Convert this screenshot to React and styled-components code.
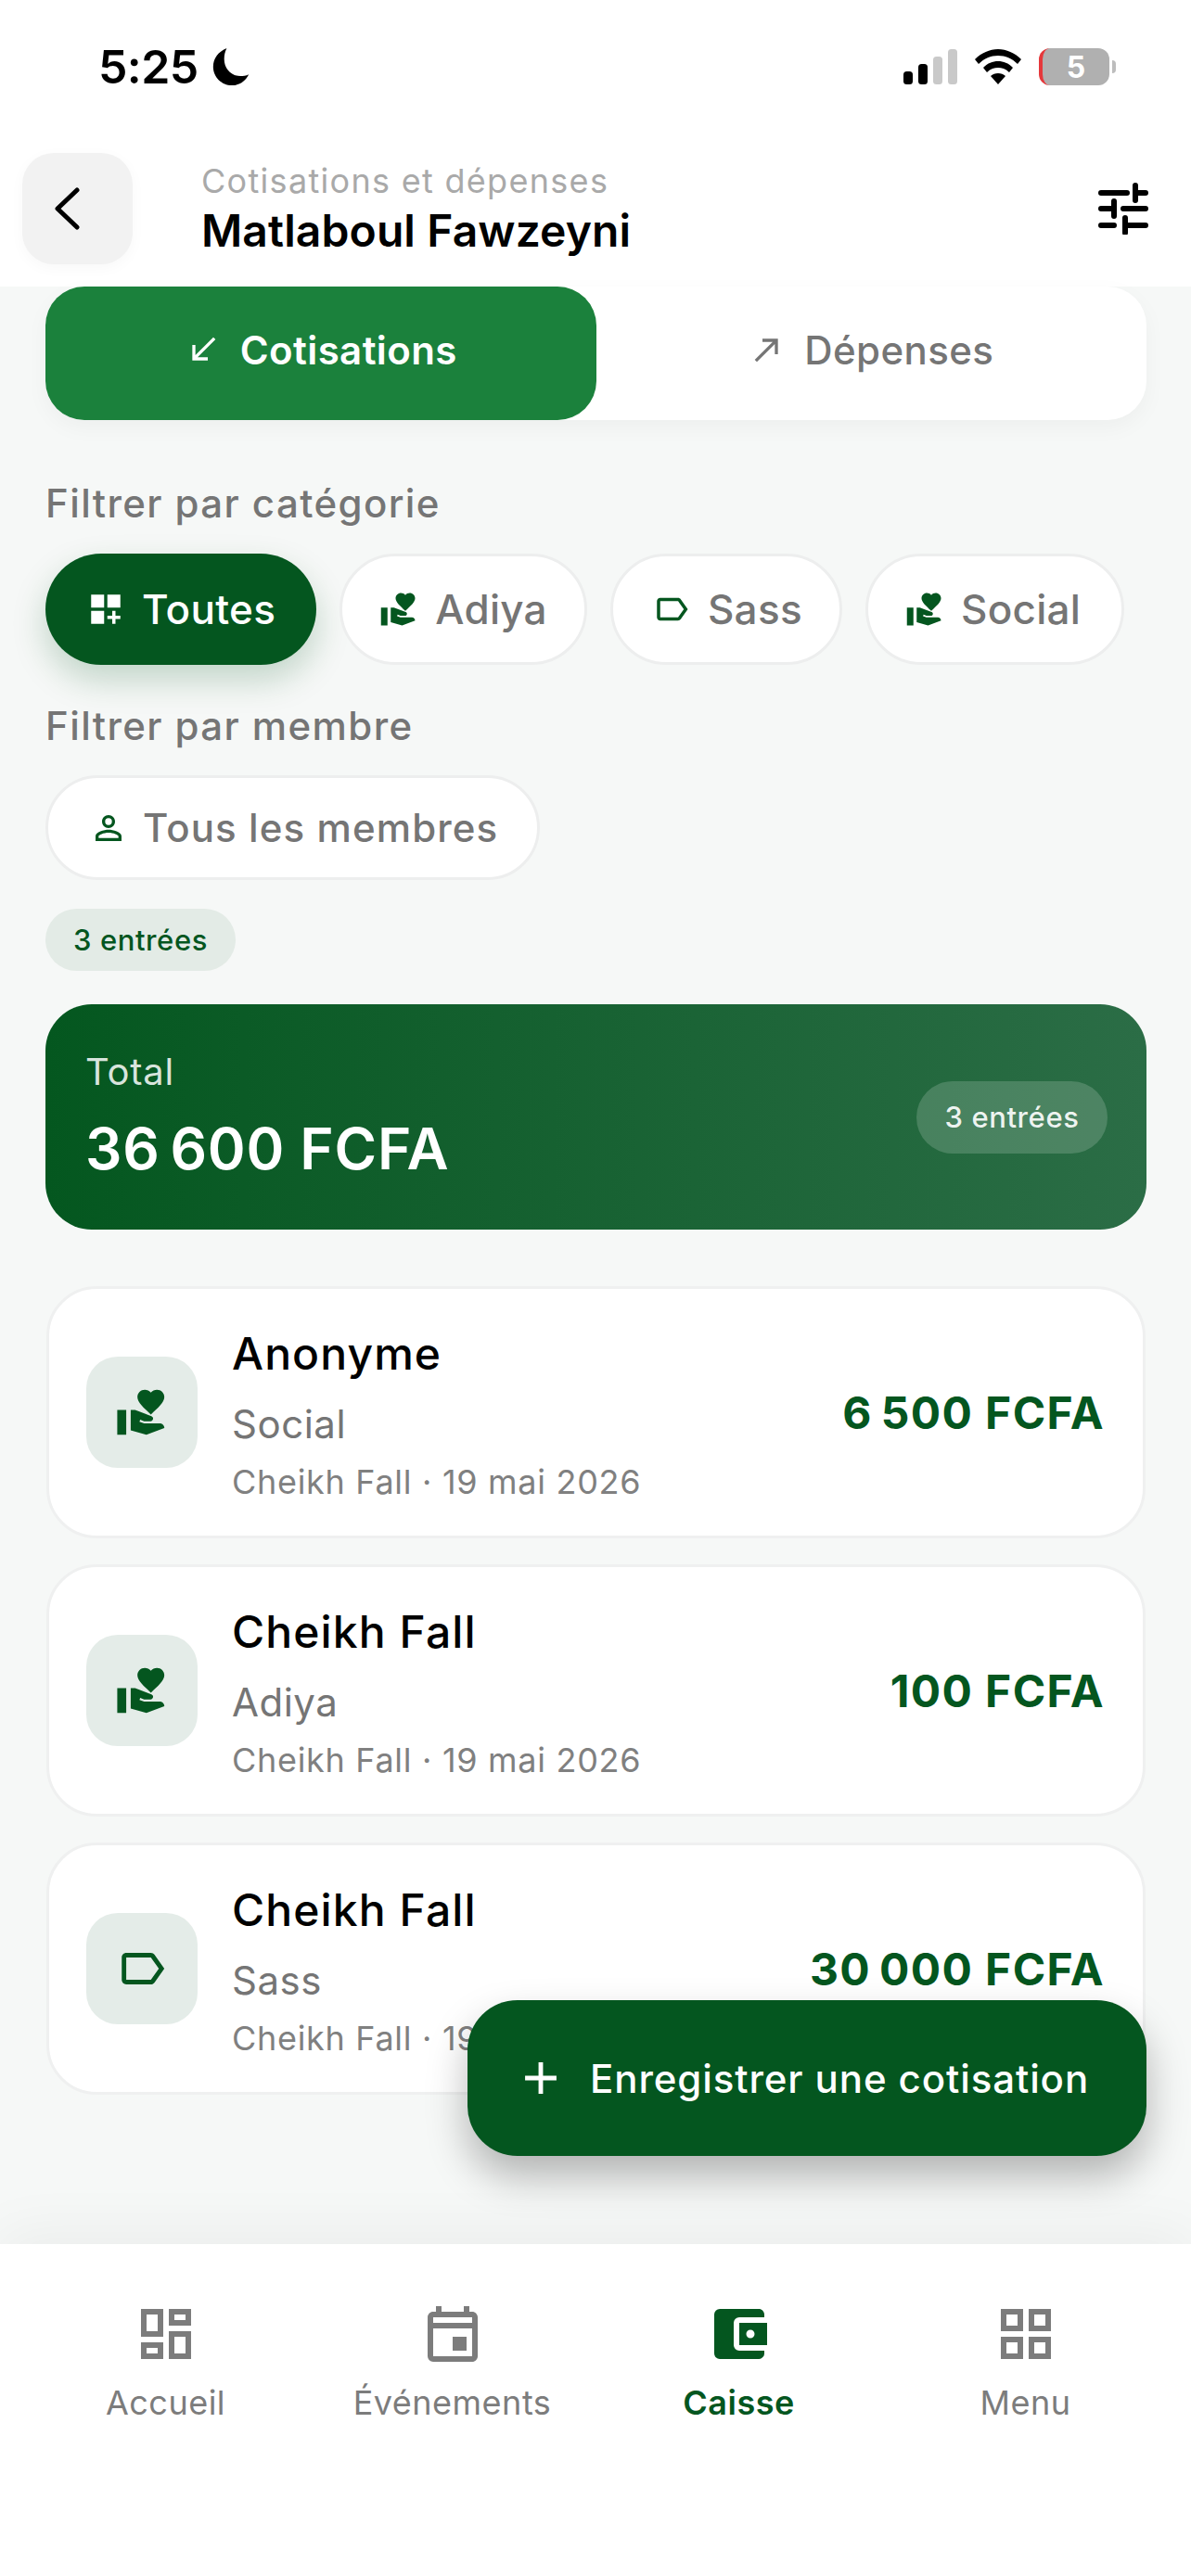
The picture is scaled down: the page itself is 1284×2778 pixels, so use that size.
import React from 'react';
import styled, { createGlobalStyle } from 'styled-components';
import {
  MdCallReceived, MdCallMade, MdDashboardCustomize, MdVolunteerActivism, MdOutlineLabel,
  MdPersonOutline, MdAdd, MdOutlineDashboard, MdOutlineEvent, MdAccountBalanceWallet, MdOutlineGridView,
} from 'react-icons/md';

const GREEN = '#04561F';
const GREY = '#757575';

const Global = createGlobalStyle`
  * { box-sizing: border-box; }
  html, body { margin: 0; padding: 0; background: #fff; }
  body { font-family: Inter, "Noto Sans", sans-serif; }
`;

const Screen = styled.div`
  width: 1284px;
  height: 2778px;
  display: flex;
  flex-direction: column;
  overflow: hidden;
  background: #F6F8F7;
`;

const Top = styled.header`
  background: #fff;
  height: 309px;
  display: flex;
  flex-direction: column;
`;

const StatusBar = styled.div`
  height: 165px;
  padding: 0 88px 0 106px;
  display: flex;
  justify-content: space-between;
  align-items: flex-start;
`;

const Clock = styled.div`
  display: flex;
  align-items: center;
  gap: 14px;
  height: 144px;
  font-size: 50px;
  font-weight: 600;
  color: #000;
  letter-spacing: -0.6px;
`;

const StatusIcons = styled.div`
  display: flex;
  align-items: center;
  gap: 19px;
  height: 144px;
`;

const Battery = styled.div`
  position: relative;
  width: 76px;
  height: 40px;
  border-radius: 12px;
  background: #B0B0B0;
  border-left: 4px solid #E5383B;
  color: #fff;
  font-size: 32px;
  font-weight: 700;
  display: flex;
  align-items: center;
  justify-content: center;
  &::after {
    content: '';
    position: absolute;
    right: -7px;
    top: 13px;
    width: 4px;
    height: 14px;
    border-radius: 0 4px 4px 0;
    background: #BDBDBD;
  }
`;

const HeaderRow = styled.div`
  display: flex;
  align-items: center;
  padding: 0 46px 0 24px;
  gap: 74px;
`;

const BackButton = styled.button`
  width: 119px;
  height: 120px;
  border: 0;
  border-radius: 34px;
  background: #F2F2F2;
  box-shadow: 0 4px 16px rgba(0, 0, 0, 0.03);
  display: flex;
  align-items: center;
  justify-content: center;
  padding: 0 24px 0 0;
  flex: none;
`;

const Titles = styled.div`
  flex: 1;
  display: flex;
  flex-direction: column;
  gap: 3px;
`;

const Overline = styled.div`
  font-size: 36px;
  line-height: 44px;
  color: #A9A9A9;
  letter-spacing: 1.3px;
`;

const Title = styled.div`
  font-size: 48px;
  line-height: 58px;
  font-weight: 600;
  color: #000;
  letter-spacing: 0.1px;
`;

const Main = styled.main`
  position: relative;
  flex: 1;
  padding: 0 48px 0 49px;
  display: flex;
  flex-direction: column;
`;

const Tabs = styled.div`
  display: flex;
  height: 144px;
  background: #fff;
  border-radius: 42px;
  box-shadow: 0 8px 24px rgba(0, 0, 0, 0.04);
`;

const Tab = styled.div`
  flex: 1;
  display: flex;
  align-items: center;
  justify-content: center;
  gap: 20px;
  padding-bottom: 8px;
  border-radius: 42px;
  font-size: 42px;
  font-weight: ${p => (p.$active ? 600 : 500)};
  letter-spacing: 0.4px;
  color: ${p => (p.$active ? '#fff' : GREY)};
  background: ${p => (p.$active ? '#1B813C' : 'transparent')};
`;

const FilterLabel = styled.div`
  font-size: 42px;
  line-height: 48px;
  font-weight: 500;
  letter-spacing: 1.4px;
  color: ${GREY};
  margin-top: ${p => p.$top}px;
  margin-bottom: ${p => p.$bottom}px;
`;

const ChipRow = styled.div`
  display: flex;
  gap: 25px;
`;

const Chip = styled.div`
  height: 120px;
  padding: 0 ${p => p.$padR || 40}px 0 ${p => p.$padL || 40}px;
  border-radius: 60px;
  display: flex;
  align-items: center;
  gap: ${p => p.$gap || 18}px;
  font-size: 44px;
  font-weight: 500;
  letter-spacing: 0.3px;
  color: ${p => (p.$active ? '#fff' : GREY)};
  background: ${p => (p.$active ? GREEN : '#fff')};
  border: ${p => (p.$active ? '0' : '3px solid #EDEEEE')};
  box-shadow: ${p => (p.$active ? '0 16px 36px rgba(4, 86, 31, 0.22)' : 'none')};
  svg { color: ${p => (p.$active ? '#fff' : GREEN)}; flex: none; }
`;

const MemberChip = styled(Chip)`
  align-self: flex-start;
  height: 113px;
  font-size: 42px;
  letter-spacing: 1.1px;
`;

const CountPill = styled.div`
  align-self: flex-start;
  margin-top: 31px;
  height: 67px;
  padding: 0 30px;
  border-radius: 34px;
  background: #E3EBE6;
  color: ${GREEN};
  font-size: 31px;
  font-weight: 500;
  letter-spacing: 0.6px;
  display: flex;
  align-items: center;
`;

const TotalCard = styled.section`
  margin-top: 36px;
  height: 243px;
  border-radius: 50px;
  padding: 0 42px 0 43px;
  background: linear-gradient(90deg, #04571F 0%, #2B6D46 100%);
  display: flex;
  align-items: center;
  justify-content: space-between;
`;

const TotalText = styled.div`
  display: flex;
  flex-direction: column;
  gap: 23px;
  padding-bottom: 3px;
  color: #fff;
`;

const TotalLabel = styled.div`
  font-size: 40px;
  line-height: 48px;
  color: rgba(255, 255, 255, 0.85);
  letter-spacing: 0.8px;
`;

const TotalAmount = styled.div`
  font-size: 62px;
  line-height: 72px;
  font-weight: 600;
  letter-spacing: 0.7px;
`;

const TotalPill = styled.div`
  height: 78px;
  width: 206px;
  border-radius: 39px;
  background: rgba(255, 255, 255, 0.17);
  color: rgba(255, 255, 255, 0.92);
  font-size: 31px;
  font-weight: 500;
  letter-spacing: 0.6px;
  display: flex;
  align-items: center;
  justify-content: center;
`;

const List = styled.div`
  margin: 61px 1px 0;
  display: flex;
  flex-direction: column;
  gap: 28px;
`;

const Card = styled.article`
  height: 272px;
  background: #fff;
  border: 3px solid #EFF0F0;
  border-radius: 54px;
  padding: 0 41px 0 40px;
  display: flex;
  align-items: center;
  gap: 37px;
`;

const IconBox = styled.div`
  width: 120px;
  height: 120px;
  border-radius: 34px;
  background: #E4ECE8;
  color: ${GREEN};
  display: flex;
  align-items: center;
  justify-content: center;
  flex: none;
`;

const CardText = styled.div`
  flex: 1;
  display: flex;
  flex-direction: column;
  padding-top: 5px;
`;

const Name = styled.div`
  font-size: 48px;
  line-height: 58px;
  font-weight: 500;
  color: #000;
  letter-spacing: 1.1px;
`;

const Category = styled.div`
  font-size: 42px;
  line-height: 50px;
  color: ${GREY};
  letter-spacing: 0.5px;
  margin-top: 22px;
`;

const Meta = styled.div`
  font-size: 36px;
  line-height: 44px;
  color: #808080;
  letter-spacing: 0.7px;
  margin-top: 15px;
  white-space: nowrap;
`;

const Amount = styled.div`
  font-size: 48px;
  font-weight: 700;
  color: ${GREEN};
  letter-spacing: 1.4px;
  white-space: nowrap;
`;

const Fab = styled.button`
  position: absolute;
  right: 48px;
  bottom: 95px;
  width: 732px;
  height: 168px;
  border: 0;
  border-radius: 54px;
  background: ${GREEN};
  color: #fff;
  font-family: inherit;
  font-size: 42px;
  font-weight: 500;
  letter-spacing: 0.9px;
  display: flex;
  align-items: center;
  gap: 24px;
  padding: 0 0 0 50px;
  box-shadow: 0 22px 44px rgba(0, 0, 0, 0.28);
  white-space: nowrap;
`;

const Nav = styled.nav`
  height: 358px;
  background: #fff;
  padding: 61px 24px 0;
  display: grid;
  grid-template-columns: repeat(4, 1fr);
  align-items: start;
  box-shadow: 0 -10px 60px rgba(0, 0, 0, 0.05);
  position: relative;
`;

const NavItem = styled.div`
  display: flex;
  flex-direction: column;
  align-items: center;
  gap: 16px;
  font-size: 36px;
  line-height: 44px;
  letter-spacing: 0.5px;
  font-weight: ${p => (p.$active ? 600 : 400)};
  color: ${p => (p.$active ? GREEN : '#7C7C7C')};
`;

const Moon = () => (
  <svg width="42" height="42" viewBox="0 0 44 46" aria-hidden="true">
    <path d="M17 1 C7 5 1 13 1 23 C1 35 11 45 23 45 C32 45 39 40 43 32 C40 34 36 34 33 34 C22 34 14 25 14 14 C14 9 15 5 17 1 Z" fill="#000" />
  </svg>
);

const Signal = () => (
  <svg width="58" height="38" viewBox="0 0 58 38" aria-hidden="true">
    <rect x="0" y="24" width="10" height="14" rx="3.5" fill="#000" />
    <rect x="16" y="16" width="10" height="22" rx="3.5" fill="#000" />
    <rect x="32" y="8" width="10" height="30" rx="3.5" fill="#C9C9C9" />
    <rect x="48" y="0" width="10" height="38" rx="3.5" fill="#C9C9C9" />
  </svg>
);

const Wifi = () => (
  <svg width="50" height="38" viewBox="0 0 50 38" aria-hidden="true">
    <path d="M25 0 C34 0 43 4 50 11 L46 16 C40 10 33 7 25 7 C17 7 10 10 4 16 L0 11 C7 4 16 0 25 0 Z" fill="#000" />
    <path d="M25 13 C31 13 36 15 41 20 L37 25 C33 21 29 20 25 20 C21 20 17 21 13 25 L9 20 C14 15 19 13 25 13 Z" fill="#000" />
    <path d="M25 26 C28 26 31 27 33 29 L25 38 L17 29 C19 27 22 26 25 26 Z" fill="#000" />
  </svg>
);

const Chevron = () => (
  <svg width="28" height="46" viewBox="0 0 28 46" aria-hidden="true">
    <polyline points="25,3 4,23 25,43" fill="none" stroke="#000" strokeWidth="5" strokeLinecap="round" strokeLinejoin="round" />
  </svg>
);

const TuneIcon = styled.svg`
  flex: none;
`;

const Tune = () => (
  <TuneIcon width="54" height="56" viewBox="0 0 54 56" aria-hidden="true">
    <g fill="none" stroke="#000" strokeWidth="6" strokeLinecap="round">
      <path d="M3 11H31M41 11H51M40 3V19" />
      <path d="M3 28H15M27 28H51M17 20V36" />
      <path d="M3 46H17M29 46H51M29 38V54" />
    </g>
  </TuneIcon>
);

const ENTRIES = [
  { name: 'Anonyme', cat: 'Social', amount: '6\u202F500 FCFA', Icon: MdVolunteerActivism },
  { name: 'Cheikh Fall', cat: 'Adiya', amount: '100 FCFA', Icon: MdVolunteerActivism },
  { name: 'Cheikh Fall', cat: 'Sass', amount: '30\u202F000 FCFA', Icon: MdOutlineLabel },
];

const NAV = [
  { label: 'Accueil', Icon: MdOutlineDashboard },
  { label: 'Événements', Icon: MdOutlineEvent },
  { label: 'Caisse', Icon: MdAccountBalanceWallet, active: true },
  { label: 'Menu', Icon: MdOutlineGridView },
];

export default function App() {
  return (
    <Screen>
      <Global />
      <Top>
        <StatusBar>
          <Clock>5:25<Moon /></Clock>
          <StatusIcons>
            <Signal />
            <Wifi />
            <Battery>5</Battery>
          </StatusIcons>
        </StatusBar>
        <HeaderRow>
          <BackButton aria-label="Retour"><Chevron /></BackButton>
          <Titles>
            <Overline>Cotisations et dépenses</Overline>
            <Title>Matlaboul Fawzeyni</Title>
          </Titles>
          <Tune />
        </HeaderRow>
      </Top>
      <Main>
        <Tabs>
          <Tab $active><MdCallReceived size={40} />Cotisations</Tab>
          <Tab><MdCallMade size={40} />Dépenses</Tab>
        </Tabs>
        <FilterLabel $top={66} $bottom={30}>Filtrer par catégorie</FilterLabel>
        <ChipRow>
          <Chip $active $padL={44} $padR={44}><MdDashboardCustomize size={42} />Toutes</Chip>
          <Chip><MdVolunteerActivism size={42} />Adiya</Chip>
          <Chip $padL={42}><MdOutlineLabel size={42} />Sass</Chip>
          <Chip $padR={44}><MdVolunteerActivism size={42} />Social</Chip>
        </ChipRow>
        <FilterLabel $top={42} $bottom={29}>Filtrer par membre</FilterLabel>
        <MemberChip $padL={44} $padR={42} $gap={16}><MdPersonOutline size={42} />Tous les membres</MemberChip>
        <CountPill>3 entrées</CountPill>
        <TotalCard>
          <TotalText>
            <TotalLabel>Total</TotalLabel>
            <TotalAmount>36{'\u202F'}600 FCFA</TotalAmount>
          </TotalText>
          <TotalPill>3 entrées</TotalPill>
        </TotalCard>
        <List>
          {ENTRIES.map((e, i) => (
            <Card key={i}>
              <IconBox><e.Icon size={58} /></IconBox>
              <CardText>
                <Name>{e.name}</Name>
                <Category>{e.cat}</Category>
                <Meta>Cheikh Fall · 19 mai 2026</Meta>
              </CardText>
              <Amount>{e.amount}</Amount>
            </Card>
          ))}
        </List>
        <Fab><MdAdd size={58} />Enregistrer une cotisation</Fab>
      </Main>
      <Nav>
        {NAV.map(n => (
          <NavItem key={n.label} $active={n.active}>
            <n.Icon size={72} />
            {n.label}
          </NavItem>
        ))}
      </Nav>
    </Screen>
  );
}
